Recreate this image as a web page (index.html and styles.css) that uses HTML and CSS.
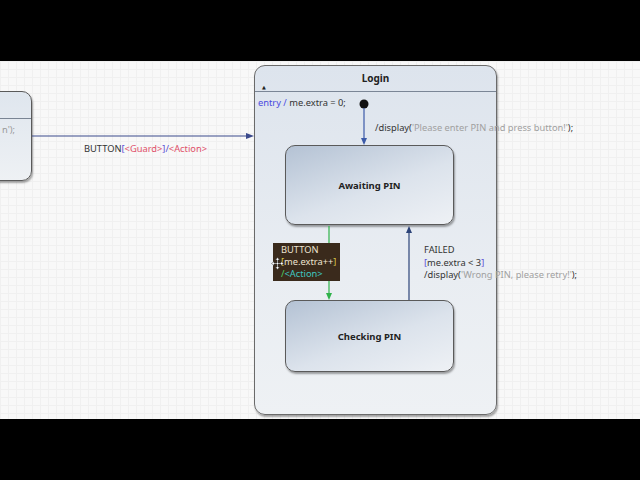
FILE: index.html
```html
<!DOCTYPE html>
<html lang="en">
<head>
    <meta charset="UTF-8">
    <title>Login state machine</title>
    <link rel="stylesheet" href="styles.css">
</head>
<body>
    <div class="stage">
        <div class="canvas">
            <!-- state on the left, cut off by the view -->
            <div class="state left-state">
                <div class="left-head"></div>
                <div class="left-body">n');</div>
            </div>

            <div class="trans-label button-label">BUTTON<span class="br">[</span><span class="red">&lt;Guard&gt;</span><span class="br">]/</span><span class="red">&lt;Action&gt;</span></div>

            <!-- composite state -->
            <div class="login">
                <div class="login-head">Login</div>
                <span class="collapse">&#9650;</span>
                <div class="entry"><span class="kw">entry /</span> me.extra = 0;</div>
            </div>

            <div class="state inner awaiting">Awaiting PIN</div>
            <div class="state inner checking">Checking PIN</div>

            <svg class="edges" width="640" height="358" viewBox="0 61 640 358">
                <line x1="32" y1="136" x2="248" y2="136" stroke="#3b4a8c" stroke-width="1"/>
                <polygon points="254,136 246,133 246,139" fill="#3b4a8c"/>
                <circle cx="364" cy="104" r="4.5" fill="#111"/>
                <line x1="364" y1="108" x2="364" y2="139" stroke="#3b5aa8" stroke-width="1.2"/>
                <polygon points="364,145 361,138 367,138" fill="#3b5aa8"/>
                <line x1="329" y1="226" x2="329" y2="294" stroke="#2fb24a" stroke-width="1.2"/>
                <polygon points="329,300 326,293 332,293" fill="#2fb24a"/>
                <line x1="409" y1="300" x2="409" y2="232" stroke="#2c4378" stroke-width="1.2"/>
                <polygon points="409,226 406,233 412,233" fill="#2c4378"/>
            </svg>

            <div class="trans-label prompt">/display(<span class="grey">'Please enter PIN and press button!'</span>);</div>

            <div class="selected">
                <div>BUTTON</div>
                <div><span class="yel">[</span>me.extra++<span class="yel">]</span></div>
                <div><span class="grn">/</span><span class="teal">&lt;Action&gt;</span></div>
                <svg class="move" width="13" height="13" viewBox="0 0 13 13">
                    <path d="M6.5 0.5 L4.5 3 H6 V6 H3 V4.5 L0.5 6.5 L3 8.5 V7 H6 V10 H4.5 L6.5 12.5 L8.5 10 H7 V7 H10 V8.5 L12.5 6.5 L10 4.5 V6 H7 V3 H8.5 Z" fill="#fff" stroke="#333" stroke-width="0.5"/>
                </svg>
            </div>

            <div class="trans-label failed">
                <div>FAILED</div>
                <div><span class="br">[</span>me.extra &lt; 3<span class="br">]</span></div>
                <div>/display(<span class="grey">'Wrong PIN, please retry!'</span>);</div>
            </div>
        </div>
    </div>
</body>
</html>
```

FILE: styles.css
```css
body {
    margin: 0;
    background-color: #000;
    font-family: "Noto Sans", "DejaVu Sans", sans-serif;
}
.stage {
    width: 640px;
    height: 480px;
    padding-top: 61px;
    box-sizing: border-box;
    background-color: #000;
}
.canvas {
    position: relative;
    width: 640px;
    height: 358px;
    overflow: hidden;
    background-color: #f8f8f8;
    background-image:
        linear-gradient(to right, #f0f0f0 1px, transparent 1px),
        linear-gradient(to bottom, #f0f0f0 1px, transparent 1px);
    background-size: 8px 8px;
    font-size: 9.3px;
    color: #333;
}
.state {
    position: absolute;
    box-sizing: border-box;
    border: 1px solid #5a5a5a;
    border-radius: 10px;
    box-shadow: 1px 2px 2px rgba(0, 0, 0, 0.35);
}
.left-state {
    left: -40px;
    top: 30px;
    width: 72px;
    height: 90px;
    background: linear-gradient(to bottom, #dfe6ee, #eef1f4);
}
.left-head {
    height: 26px;
    border-bottom: 1px solid #7a8594;
}
.left-body {
    padding: 4px 0 0 41px;
    color: #999;
}
.trans-label {
    position: absolute;
    white-space: nowrap;
    line-height: 12.5px;
}
.button-label {
    left: 84px;
    top: 82px;
}
.br { color: #5b4fd6; }
.red { color: #e0506a; }
.grey { color: #a0a0a0; }
.kw { color: #4a4ae0; }
.login {
    position: absolute;
    left: 254px;
    top: 4px;
    width: 243px;
    height: 350px;
    box-sizing: border-box;
    border: 1px solid #6a6a6a;
    border-radius: 11px;
    background: linear-gradient(to bottom, #dde4ed, #e9edf2 60%, #eef1f4);
    box-shadow: 1px 2px 2px rgba(0, 0, 0, 0.35);
}
.login-head {
    height: 25px;
    line-height: 25px;
    text-align: center;
    font-weight: bold;
    font-size: 10px;
    color: #222;
    border-bottom: 1px solid #7b8696;
}
.collapse {
    position: absolute;
    left: 7px;
    top: 18px;
    font-size: 5px;
    color: #222;
}
.entry {
    padding: 4px 0 0 3px;
}
.inner {
    left: 285px;
    width: 169px;
    display: flex;
    align-items: center;
    justify-content: center;
    font-weight: bold;
    font-size: 9.5px;
    color: #222;
    background: linear-gradient(160deg, #b4c2d4, #dce3ec 55%, #eef1f5);
}
.awaiting {
    top: 84px;
    height: 80px;
}
.checking {
    top: 239px;
    height: 72px;
}
.edges {
    position: absolute;
    left: 0;
    top: 0;
}
.prompt {
    left: 375px;
    top: 61px;
}
.selected {
    position: absolute;
    left: 273px;
    top: 182px;
    width: 67px;
    height: 38px;
    box-sizing: border-box;
    padding: 1px 0 0 8px;
    background-color: #3a2a1c;
    color: #eee4d2;
    line-height: 12px;
}
.yel { color: #d8c84a; }
.grn { color: #4fd060; }
.teal { color: #3fc6c0; }
.move {
    position: absolute;
    left: -2px;
    top: 14px;
}
.failed {
    left: 424px;
    top: 183px;
}
```
